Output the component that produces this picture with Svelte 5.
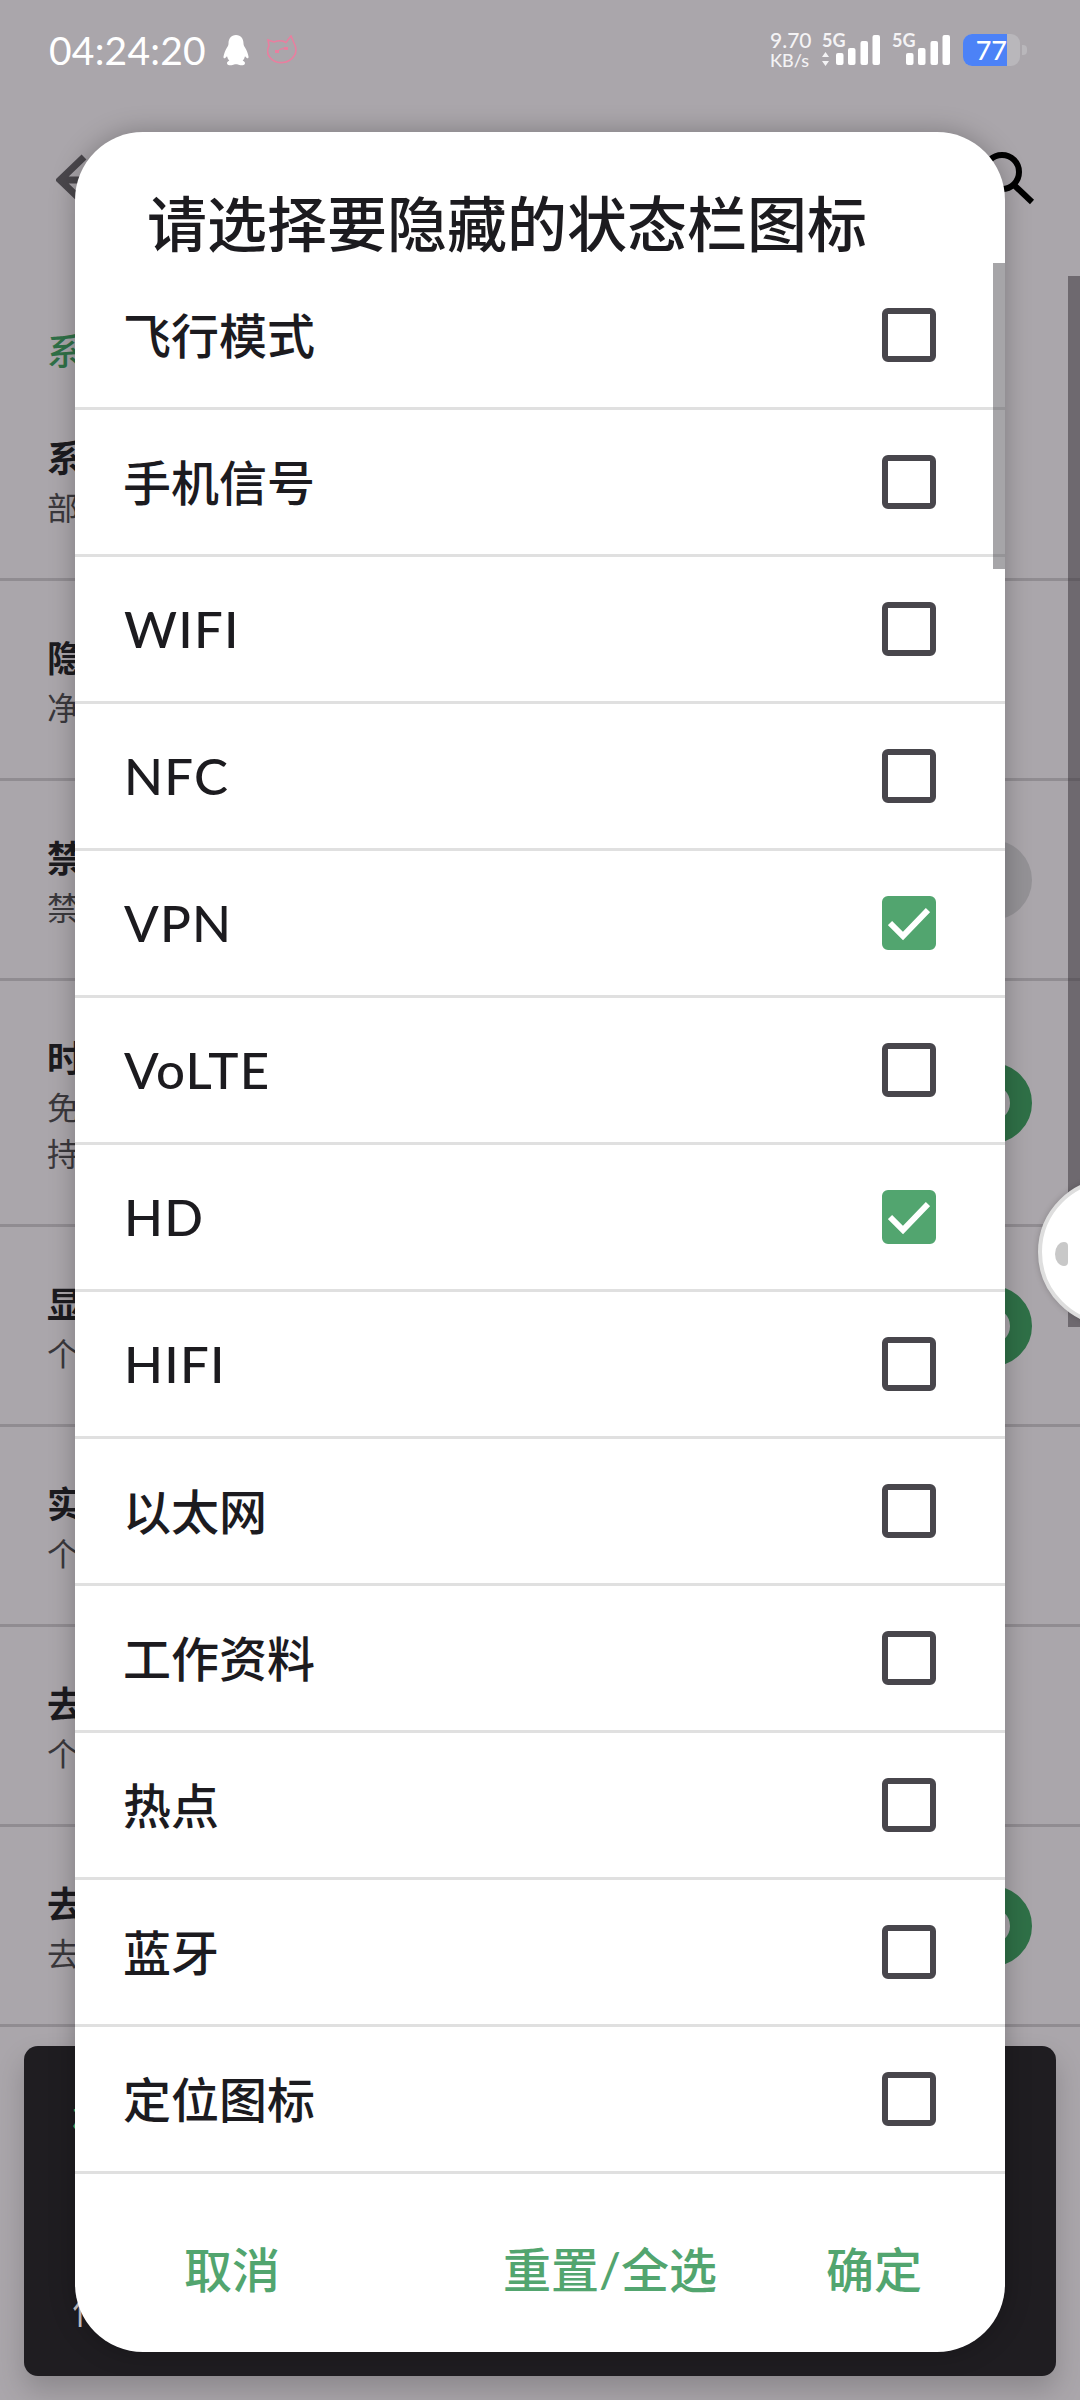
<script>
  const bgRows = [
    { lines: ['系', '部'], sw: '' },
    { lines: ['隐', '净'], sw: '' },
    { lines: ['禁', '禁'], sw: 'off' },
    { lines: ['时', '免', '持'], sw: 'on' },
    { lines: ['显', '个'], sw: 'on' },
    { lines: ['实', '个'], sw: '' },
    { lines: ['去', '个'], sw: '' },
    { lines: ['去', '去'], sw: 'on' }
  ];
  const items = [
    { label: '飞行模式' }, { label: '手机信号' }, { label: 'WIFI', latin: true }, { label: 'NFC', latin: true },
    { label: 'VPN', on: true, latin: true }, { label: 'VoLTE', latin: true }, { label: 'HD', on: true, latin: true }, { label: 'HIFI', latin: true },
    { label: '以太网' }, { label: '工作资料' }, { label: '热点' }, { label: '蓝牙' }, { label: '定位图标' }
  ];
</script>

{#snippet signal(arrows)}
  <svg class="signal" width="58" height="38" viewBox="0 -6 58 38">
    <text x="0" y="13" class="g5">5G</text>
    {#if arrows}
      <path d="M3.500 18l3.500 5h-7zM3.500 32l3.500-5h-7z" fill="#f4f3f5" />
    {/if}
    <rect x="14" y="19" width="7.500" height="12" rx="2" fill="#fff" />
    <rect x="26" y="14" width="7.500" height="17" rx="2" fill="#fff" />
    <rect x="38.500" y="7" width="7.500" height="24" rx="2" fill="#fff" />
    <rect x="50.500" y="1" width="7.500" height="30" rx="2" fill="#fff" />
  </svg>
{/snippet}

<div class="screen">
  <div class="status">
    <span class="time">04:24:20</span>
    <svg class="penguin" width="26" height="31" viewBox="0 0 26 31">
      <path fill="#fff" d="M13 0c-5 0-7.500 4-7.500 8.500 0 1.500-.5 2.500-1.500 4C2.500 15 1 18.500 .5 21.500c-.3 1.800.8 2.300 2 1.300l1.500-1.500c.4 1.700 1.200 3.200 2.300 4.400-1.700.7-2.600 1.800-2.200 3 .5 1.400 3 1.800 5.400 1.300 1.200-.3 2-.8 3.500-.8s2.300.5 3.500.8c2.400.5 4.900.1 5.400-1.300.4-1.200-.5-2.300-2.200-3 1.100-1.200 1.900-2.700 2.300-4.400l1.500 1.500c1.200 1 2.300.5 2-1.300-.5-3-2-6.500-3.500-9-1-1.500-1.500-2.500-1.500-4C20.500 4 18 0 13 0z" />
    </svg>
    <svg class="cat" width="30" height="30" viewBox="0 0 30 30" fill="none" stroke="#e87f9f" stroke-width="1.600">
      <path d="M2 11L1 5l6 2c4-1.500 9-1.500 12 .5L24 1l3 7c2 4 3 9 0 13-2 3-6 6-11 6.500-5 .5-10-1-13-5C0 19 0 15 2 11z" />
      <path d="M8 15l4 0 0 3-4 0zM17 12l4 0 0 3-4 0z" fill="#e87f9f" stroke="none" />
      <path d="M12 15l5-2" stroke-width="1.200" />
    </svg>
    <div class="status-right">
      <div class="speed"><span>9.70</span><span class="unit">KB/s</span></div>
      {@render signal(true)}
      {@render signal(false)}
      <div class="battery">
        <div class="level"><span>77</span></div>
      </div>
      <span class="nub"></span>
    </div>
  </div>

  <div class="toolbar">
    <svg width="50" height="60" viewBox="0 0 50 60" fill="none" stroke="#4a474c" stroke-width="7">
      <path d="M28 7L4 30l24 23M6 30h44" />
    </svg>
    <svg width="56" height="64" viewBox="0 0 56 64" fill="none" stroke="#000" stroke-width="6">
      <circle cx="22" cy="22" r="17" />
      <path d="M34 35l18 17" />
    </svg>
  </div>

  <div class="section">系</div>

  {#each bgRows as row}
    <div class="bg-row">
      <div class="bg-text">
        {#each row.lines as line, i}
          <span class={i === 0 ? 'bg-title' : 'bg-sub'}>{line}</span>
        {/each}
      </div>
      {#if row.sw}<span class="switch {row.sw}"></span>{/if}
    </div>
  {/each}

  <div class="page-bar"></div>
  <div class="float-ball"><span class="ball-arrow"></span></div>

  <div class="snackbar">
    <span class="snack-action">确</span>
    <span class="snack-text">什</span>
  </div>

  <div class="dialog">
    <h1>请选择要隐藏的状态栏图标</h1>
    <div class="list">
      {#each items as item}
        <div class="item">
          <span class={item.latin ? 'latin' : 'cjk'}>{item.label}</span>
          <span class="box" class:on={item.on}>
            {#if item.on}
              <svg width="42" height="42" viewBox="0 0 42 42" fill="none" stroke="#fff" stroke-width="6">
                <path d="M2 21l13 13L40 8" />
              </svg>
            {/if}
          </span>
        </div>
      {/each}
    </div>
    <div class="actions">
      <span class="first">取消</span>
      <span>重置/全选</span>
      <span>确定</span>
    </div>
    <div class="thumb"></div>
  </div>
</div>

<style>
  :global(body) {
    margin: 0;
  }
  .screen {
    position: relative;
    width: 1080px;
    height: 2400px;
    overflow: hidden;
    background: #aaa6ab;
    font-family: Lato, "Noto Sans CJK SC", sans-serif;
    color: #1c1b1f;
  }
  .status {
    display: flex;
    align-items: center;
    height: 32px;
    padding: 34px 53px 0 49px;
    color: #fff;
  }
  .time {
    font-size: 39px;
    line-height: 32px;
    width: 174px;
    letter-spacing: 0.2px;
  }
  .penguin {
    margin-right: 18px;
    flex: none;
  }
  .cat {
    flex: none;
  }
  .status-right {
    display: flex;
    align-items: center;
    margin-left: auto;
    gap: 12px;
  }
  .speed {
    display: flex;
    flex-direction: column;
    width: 40px;
    font-size: 21px;
    line-height: 21px;
    font-weight: 500;
    color: #f4f3f5;
  }
  .unit {
    font-size: 18px;
  }
  .signal {
    flex: none;
    margin-top: -6px;
  }
  .g5 {
    font-size: 18px;
    font-weight: 700;
    fill: #f4f3f5;
    font-family: Lato, sans-serif;
  }
  .battery {
    width: 57px;
    height: 32px;
    border-radius: 9px;
    background: #b9b7bb;
    overflow: hidden;
    flex: none;
    margin-left: 1px;
  }
  .level {
    width: 44px;
    height: 32px;
    background: #4c82f7;
    color: #fff;
    font-size: 27px;
    line-height: 32px;
    text-align: right;
    font-weight: 500;
  }
  .nub {
    width: 5px;
    height: 10px;
    background: #b9b7bb;
    border-radius: 0 4px 4px 0;
    margin-left: -10px;
  }
  .toolbar {
    display: flex;
    justify-content: space-between;
    align-items: flex-start;
    height: 64px;
    padding: 84px 44px 88px 56px;
  }
  .section {
    font-size: 36px;
    line-height: 48px;
    font-weight: 500;
    color: #2f7047;
    padding-left: 47px;
    margin: 25px 0 6px;
    height: 48px;
  }
  .bg-row {
    display: flex;
    justify-content: space-between;
    align-items: center;
    border-bottom: 3px solid #908c91;
    box-sizing: border-box;
    padding-right: 48px;
  }
  .bg-text {
    display: flex;
    flex-direction: column;
    padding: 53px 0 47px 47px;
  }
  .bg-title {
    font-size: 36px;
    line-height: 48px;
    font-weight: 700;
    color: #1c1b1f;
    margin-bottom: 3px;
  }
  .bg-sub {
    font-size: 32px;
    line-height: 46px;
    color: #3a383c;
  }
  .switch {
    width: 80px;
    height: 80px;
    border-radius: 50%;
    box-sizing: border-box;
    flex: none;
  }
  .switch.off {
    background: #949296;
  }
  .switch.on {
    border: 22px solid #2f7047;
    background: #aaa6ab;
  }
  .page-bar {
    position: absolute;
    right: 0;
    top: 276px;
    width: 12px;
    height: 1051px;
    background: rgba(60, 55, 62, 0.55);
  }
  .float-ball {
    position: absolute;
    left: 1038px;
    top: 1178px;
    width: 148px;
    height: 148px;
    box-sizing: border-box;
    border-radius: 50%;
    background: #fff;
    border: 4px solid #dedede;
    box-shadow: 0 0 6px rgba(0, 0, 0, 0.2);
  }
  .ball-arrow {
    position: absolute;
    left: 13px;
    top: 60px;
    width: 13px;
    height: 24px;
    background: #c8c8c8;
    border-radius: 70% 4px 4px 70% / 50% 4px 4px 50%;
  }
  .snackbar {
    position: absolute;
    left: 24px;
    top: 2046px;
    width: 1032px;
    height: 330px;
    box-sizing: border-box;
    padding: 58px 0 0 48px;
    border-radius: 14px;
    background: #1f1d21;
    box-shadow: 0 14px 28px rgba(0, 0, 0, 0.18);
    display: flex;
    flex-direction: column;
  }
  .snack-action {
    font-size: 36px;
    line-height: 40px;
    color: #4cb96a;
  }
  .snack-text {
    font-size: 36px;
    line-height: 48px;
    margin-top: 142px;
    color: #c9c7cb;
  }
  .dialog {
    position: absolute;
    left: 75px;
    top: 132px;
    width: 930px;
    height: 2220px;
    display: flex;
    flex-direction: column;
    background: #fff;
    border-radius: 68px;
    box-shadow: 0 0 26px rgba(0, 0, 0, 0.26);
    overflow: hidden;
  }
  h1 {
    margin: 0;
    padding: 62px 0 9px 72px;
    font-size: 60px;
    line-height: 60px;
    font-weight: 500;
    flex: none;
  }
  .list {
    flex: none;
  }
  .item {
    display: flex;
    align-items: center;
    justify-content: space-between;
    height: 144px;
    padding: 0 69px 0 48px;
    border-bottom: 3px solid #e0e0e0;
    font-size: 48px;
    font-weight: 500;
  }
  .cjk {
    margin-bottom: 5px;
  }
  .latin {
    font-size: 51px;
    letter-spacing: 1.200px;
    margin: 0 0 1px 1px;
  }
  .box {
    width: 54px;
    height: 54px;
    box-sizing: border-box;
    border: 6px solid #48464c;
    border-radius: 6px;
    display: flex;
    align-items: center;
    justify-content: center;
  }
  .box.on {
    background: #52a56f;
    border-color: #52a56f;
  }
  .actions {
    display: flex;
    gap: 109px;
    padding: 7px 83px 0 109px;
    flex: 1;
    align-items: center;
    color: #52a56f;
    font-size: 48px;
    font-weight: 500;
  }
  .first {
    margin-right: auto;
  }
  .thumb {
    position: absolute;
    right: 0;
    top: 131px;
    width: 12px;
    height: 306px;
    background: rgba(60, 58, 66, 0.46);
  }
</style>
